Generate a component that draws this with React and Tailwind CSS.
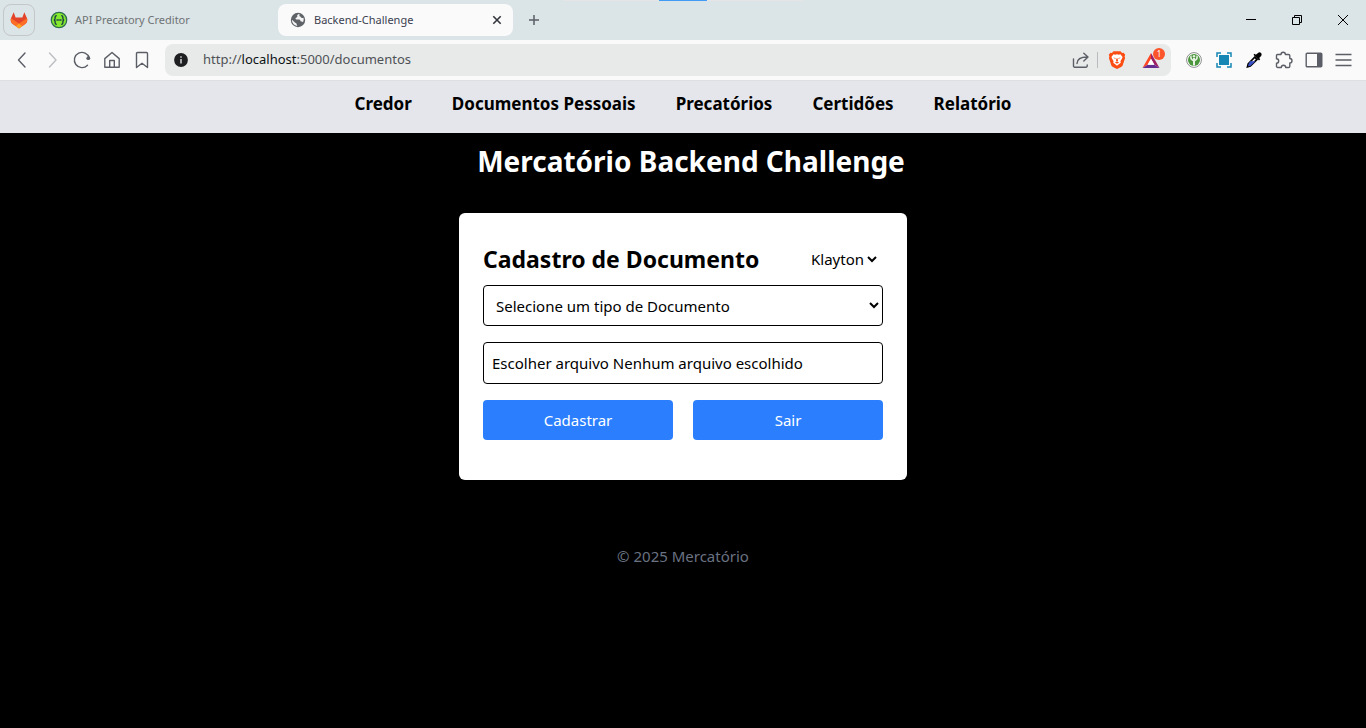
function GitlabLogo() {
  return (
    <svg width="18" height="18" viewBox="0 0 18 18" aria-hidden="true">
      <path d="M3.700 1.200 1 7.200c-.7 2-.1 4.300 1.500 5.600L9 17.400l6.500-4.600c1.600-1.300 2.200-3.600 1.500-5.600l-2.700-6-1.900 5.300H5.600z" fill="#e24329" />
      <path d="M1 7.200c-.7 2-.1 4.300 1.500 5.600l3.200 2.300L9 12.400z" fill="#fc6d26" />
      <path d="M17 7.200c.7 2 .1 4.300-1.500 5.600l-3.200 2.300L9 12.400z" fill="#fc6d26" />
      <path d="M5.600 15 9 12.400 12.400 15 9 17.400z" fill="#fca326" />
    </svg>
  );
}

function SwaggerLogo() {
  return (
    <svg width="18" height="18" viewBox="0 0 18 18" fill="none" aria-hidden="true">
      <circle cx="9" cy="9" r="7.700" fill="#85ea2d" stroke="#2f6f50" strokeWidth="1.300" />
      <path d="M6.800 4.700c-1.500 0-1.700.5-1.700 1.600v1.200c0 .9-.4 1.500-1.300 1.500.9 0 1.300.6 1.300 1.500v1.200c0 1.100.2 1.600 1.700 1.600M11.200 4.700c1.500 0 1.700.5 1.700 1.600v1.200c0 .9.4 1.500 1.300 1.500-.9 0-1.300.6-1.300 1.500v1.200c0 1.100-.2 1.600-1.700 1.600" stroke="#173647" strokeWidth="1.300" />
      <path d="M6.500 9h5" stroke="#173647" strokeWidth="1.500" strokeDasharray="1.400 .4" />
    </svg>
  );
}

function Stroke({ size = 20, children, color = "#5b5e66", width = 1.4 }) {
  return (
    <svg width={size} height={size} viewBox="0 0 20 20" fill="none" stroke={color} strokeWidth={width} strokeLinecap="round" strokeLinejoin="round" aria-hidden="true">
      {children}
    </svg>
  );
}

const iconButton = "flex h-8 w-[30px] shrink-0 items-center justify-center";

function TabStrip() {
  return (
    <div className="relative flex h-10 items-center bg-[#dbe4e6] pl-[3px] font-['Noto_Sans',sans-serif] text-[11px]">
      <div className="absolute left-1/2 top-0 flex h-px w-[240px] -translate-x-1/2 justify-center bg-[#e5e5e5]" aria-hidden="true">
        <span className="h-px w-12 bg-[#429cf5]" />
      </div>
      <button aria-label="GitLab" className="flex size-8 shrink-0 items-center justify-center rounded-lg border border-[#c5c7c9]">
        <GitlabLogo />
      </button>
      <button className="flex h-8 w-[235px] items-center gap-[7px] pl-[15px] text-[#6e7375]">
        <SwaggerLogo />
        API Precatory Creditor
      </button>
      <div className="ml-2 flex h-8 w-[235px] items-center rounded-lg bg-[#fafafa] pl-3 pr-2 text-[#3b3e4f]">
        <svg width="16" height="16" viewBox="0 0 16 16" aria-hidden="true">
          <circle cx="8" cy="8" r="7.200" fill="#5f6368" />
          <path d="M9.300 1.900c-1.700.3-2.500 1.400-2 2.400.4.900-.7 1.200-1.400 1.500-.8.400-.3 1.700.7 1.700h2.600c.8 0 1.300.8 1.200 1.700l1.400.3c.4.100.8.300 1.100.7.800-1.300 1-3 .5-4.500-.8.600-2.200.6-2.500-.4-.2-.8-1.300-.5-1.500-1.200-.2-.9.500-1.300-.1-2.200zM1.900 7.800l3.300 2.900c.4.400.9.200 1.200.7.400.8.300 1.700 1.100 2.600-3.200-.2-5.600-2.900-5.600-6.200z" fill="#f4f4f5" />
        </svg>
        <span className="ml-2 flex-1">Backend-Challenge</span>
        <button aria-label="Fechar guia" className="flex size-4 items-center justify-center">
          <svg width="10" height="10" viewBox="0 0 10 10" stroke="#33363d" strokeWidth="1.600" aria-hidden="true"><path d="m1.300 1.300 7.400 7.400m0-7.400L1.300 8.700" /></svg>
        </button>
      </div>
      <button aria-label="Nova guia" className="ml-[13px] flex size-4 items-center justify-center">
        <svg width="12" height="12" viewBox="0 0 12 12" stroke="#5b5e66" strokeWidth="1.500" aria-hidden="true"><path d="M6 1v10M1 6h10" /></svg>
      </button>
      <div className="ml-auto flex">
        <button aria-label="Minimizar" className="flex h-10 w-[46px] items-center justify-center">
          <svg width="10" height="10" viewBox="0 0 10 10" stroke="#000" aria-hidden="true"><path d="M0 4.500h10" /></svg>
        </button>
        <button aria-label="Restaurar" className="flex h-10 w-[46px] items-center justify-center">
          <svg width="10" height="10" viewBox="0 0 10 10" fill="none" stroke="#000" aria-hidden="true"><path d="M.5 2.500h7v7h-7zM2.500 2.500v-2h7v7h-2" /></svg>
        </button>
        <button aria-label="Fechar" className="flex h-10 w-[46px] items-center justify-center">
          <svg width="10" height="10" viewBox="0 0 10 10" stroke="#000" aria-hidden="true"><path d="m0 0 10 10m0-10L0 10" /></svg>
        </button>
      </div>
    </div>
  );
}

function Toolbar() {
  return (
    <div className="flex h-[41px] items-center border-b border-[#dedfe0] bg-[#fafafa] px-[7px]">
      <button aria-label="Voltar" className={iconButton}><Stroke><path d="m13 3-6.500 7 6.500 7" /></Stroke></button>
      <button aria-label="Avançar" className={iconButton}><Stroke color="#bcbec1"><path d="m7.500 3 6.500 7-6.500 7" /></Stroke></button>
      <button aria-label="Recarregar" className={iconButton}>
        <Stroke><path d="M15.500 15.200A7.600 7.600 0 1 1 17.300 8" /><circle cx="16.300" cy="8.200" r="1.900" fill="#5b5e66" stroke="none" /></Stroke>
      </button>
      <button aria-label="Página inicial" className={iconButton}>
        <Stroke><path d="M2.800 8.600 10 2.500l7.200 6.100v8.700H2.800zM7.700 17.300V10.500h4.600v6.800" /></Stroke>
      </button>
      <button aria-label="Favoritos" className={iconButton}><Stroke><path d="M4.500 3.500a1 1 0 0 1 1-1h9a1 1 0 0 1 1 1v14L10 13.300l-5.500 4.200z" /></Stroke></button>
      <div className="ml-2 flex h-8 flex-1 items-center rounded-lg bg-[#e8eae9] pl-[9px] pr-[5px]">
        <button aria-label="Informações do site" className="flex size-[14px] items-center justify-center">
          <svg width="14" height="14" viewBox="0 0 14 14" aria-hidden="true"><circle cx="7" cy="7" r="6.900" fill="#1d1f21" /><path d="M7 3.300v1.400M7 6v4.600" stroke="#d5d7d8" strokeWidth="1.500" /></svg>
        </button>
        <a href="http://localhost:5000/documentos" className="ml-[15px] flex-1 font-['Noto_Sans',sans-serif] text-[13px] text-[#4e5156]">
          http://<span className="text-[#0d1214]">localhost</span>:5000/documentos
        </a>
        <button aria-label="Compartilhar" className="flex h-8 w-8 items-center justify-center">
          <Stroke><path d="M2.500 9v7a1.200 1.200 0 0 0 1.200 1.200H15a1.200 1.200 0 0 0 1.200-1.200v-1M6 13.500c.2-4.500 3-6.500 10-6.500M12.800 3.200 17 7l-4.200 4" /></Stroke>
        </button>
        <span className="h-4 w-px bg-[#b9bcbe]" />
        <button aria-label="Brave Shields" className="flex h-8 w-[38px] items-center justify-center">
          <svg width="18" height="18" viewBox="0 0 18 18" aria-hidden="true">
            <path d="M5.500.3h7l1.600 1.600 1.500-.2 1.600 2-.6 1.700.5 1.500-2.300 7.200c-.3 1-1 1.500-1.700 2L9 18l-4.100-1.900c-.7-.5-1.400-1-1.700-2L.9 6.900l.5-1.500-.6-1.700 1.600-2 1.500.2z" fill="#fb4d13" />
            <path d="m5.600 3.300 1.700.4L9 3.200l1.700.5 1.700-.4 2.200 2.600-.6 1.600-1.600 2.700.4 1.500-1.700 1.400L9 14.800l-2.100-1.700-1.700-1.400.4-1.500L4 7.500l-.6-1.600z" fill="#fff" />
            <path d="m5.300 6.500 2.300.6-.3 1zM12.700 6.500l-2.300.6.300 1zM8.300 7.500h1.400l.3 2.200-1 .7-1-.7zM6.900 11.300 9 10.500l2.100.8L9 12.700z" fill="#fb4d13" />
          </svg>
        </button>
        <button aria-label="Brave Rewards" className="relative flex h-8 w-[30px] items-center justify-center">
          <svg width="18" height="17" viewBox="0 0 18 17" aria-hidden="true">
            <path d="m9 1 8.500 15L12.400 12.700 9 6.800z" fill="#9e1f63" />
            <path d="M9 1v5.800l-3.400 5.900L.5 16z" fill="#ff4724" />
            <path d="m.5 16 5.100-3.300h6.800l5.100 3.300z" fill="#662d91" />
            <path d="m9 6.800 3.400 5.900H5.600z" fill="#fff" />
          </svg>
          <span className="absolute right-px top-1 flex size-3 items-center justify-center rounded-full bg-[#fb542b] font-['Noto_Sans',sans-serif] text-[8px] leading-none text-white">1</span>
        </button>
      </div>
      <button aria-label="KeePassXC" className={`${iconButton} ml-2`}>
        <svg width="16" height="16" viewBox="0 0 16 16" aria-hidden="true">
          <circle cx="8" cy="8" r="7.400" fill="#fff" stroke="#8b8e8d" />
          <circle cx="8" cy="8" r="6" fill="#4b963d" />
          <path d="M4.200 4.300c-.5 2.300.5 4 2.800 5V13.600h2V9.300c2.300-1 3.300-2.700 2.800-5l-1.500-1c.3 2-.2 3.400-1.300 4.200V6H7v1.500C5.900 6.700 5.400 5.300 5.700 3.300z" fill="#e7f1e4" />
          <circle cx="8" cy="4.200" r="1.200" fill="#e7f1e4" />
        </svg>
      </button>
      <button aria-label="Captura de tela" className={iconButton}>
        <svg width="16" height="16" viewBox="0 0 16 16" fill="none" stroke="#1686b4" strokeWidth="1.500" aria-hidden="true">
          <path d="M1 5V1h4M11 1h4v4M15 11v4h-4M5 15H1v-4" />
          <path d="M3 3h10v10H3z" fill="#1686b4" stroke="none" />
        </svg>
      </button>
      <button aria-label="Conta-gotas" className={iconButton}>
        <svg width="16" height="16" viewBox="0 0 16 16" aria-hidden="true">
          <path d="m8.700 5.100 2.300 2.300-6.700 6.500-2.800.9.700-3z" fill="#fff" stroke="#000" strokeWidth="1.700" />
          <path d="m4.200 9.300 5.300-.1-5.300 4.700-2 .4.500-2.500z" fill="#3850c8" />
          <path d="m7.500 2.800 1.200-1 1.100 1L12 .9c2.300-1.700 4.700.9 3.100 3L13.200 6l1 1.200-1.200 1.200z" fill="#000" />
        </svg>
      </button>
      <button aria-label="Extensões" className={iconButton}>
        <Stroke><path d="M3.500 4.500H7a2.200 2.200 0 0 1 4.400 0h3.100a1.300 1.300 0 0 1 1.300 1.300v2.700a2.200 2.200 0 0 1 0 4.400v3.300a1.300 1.300 0 0 1-1.300 1.300h-2.800a2.200 2.200 0 0 0-4.400 0H3.800a1.300 1.300 0 0 1-1.300-1.300v-3a2.200 2.200 0 0 0 0-4.400V5.500a1 1 0 0 1 1-1z" /></Stroke>
      </button>
      <button aria-label="Barra lateral" className={iconButton}>
        <svg width="18" height="16" viewBox="0 0 18 16" aria-hidden="true"><rect x="1.200" y="1.200" width="15.600" height="13.600" rx="1" fill="none" stroke="#5b5e66" strokeWidth="1.400" /><path d="M12 1h5v14h-5z" fill="#5b5e66" /></svg>
      </button>
      <button aria-label="Menu" className={iconButton}>
        <svg width="18" height="14" viewBox="0 0 18 14" stroke="#5b5e66" strokeWidth="1.400" aria-hidden="true"><path d="M.5 1.500h16M.5 7h16M.5 12.500h16" /></svg>
      </button>
    </div>
  );
}

const links = ["Credor", "Documentos Pessoais", "Precatórios", "Certidões", "Relatório"];

export default function App() {
  return (
    <div className="flex min-h-screen flex-col bg-black font-['Noto_Sans',sans-serif]">
      <TabStrip />
      <Toolbar />
      <nav className="flex justify-center gap-10 bg-[#e5e6eb] pb-[15px] pt-[9px] text-[17px] leading-7 font-bold text-black">
        {links.map((label) => (
          <a key={label} href="#">{label}</a>
        ))}
      </nav>
      <main className="flex flex-col items-center">
        <h1 className="mt-2 pl-4 text-[28px] leading-10 font-bold text-white">Mercatório Backend Challenge</h1>
        <form className="mt-8 w-full max-w-md rounded-md bg-white px-6 pb-10 pt-6 text-[15px] leading-6" onSubmit={(e) => e.preventDefault()}>
          <div className="flex h-12 items-center justify-between pb-1">
            <h2 className="text-[23px] leading-8 font-bold">Cadastro de Documento</h2>
            <select aria-label="Credor" className="mr-[3px] bg-white">
              <option>Klayton</option>
            </select>
          </div>
          <select aria-label="Tipo de Documento" className="block h-[41px] w-full rounded border border-black bg-white px-2">
            <option>Selecione um tipo de Documento</option>
          </select>
          <label className="mt-4 flex h-[42px] items-center rounded border border-black px-2 focus-within:outline-2">
            <input type="file" className="sr-only" />
            Escolher arquivo Nenhum arquivo escolhido
          </label>
          <div className="mt-4 grid grid-cols-2 gap-5 text-white">
            <button type="submit" className="h-10 rounded bg-[#2b7fff]">Cadastrar</button>
            <button type="button" className="h-10 rounded bg-[#2b7fff]">Sair</button>
          </div>
        </form>
      </main>
      <footer className="mt-16 text-center text-[15px] leading-6 text-[#6a7282]">© 2025 Mercatório</footer>
    </div>
  );
}
